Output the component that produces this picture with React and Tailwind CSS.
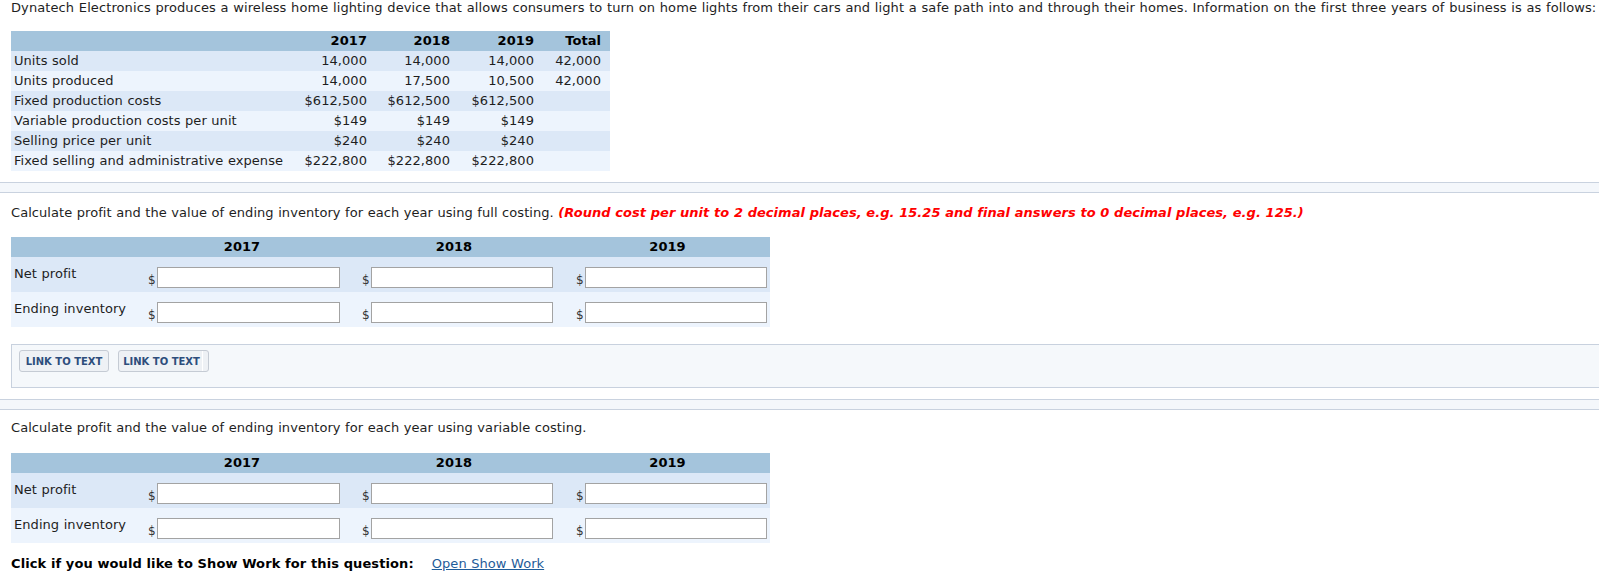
const facts = [
  { label: 'Units sold', v: ['14,000', '14,000', '14,000', '42,000'] },
  { label: 'Units produced', v: ['14,000', '17,500', '10,500', '42,000'] },
  { label: 'Fixed production costs', v: ['$612,500', '$612,500', '$612,500', ''] },
  { label: 'Variable production costs per unit', v: ['$149', '$149', '$149', ''] },
  { label: 'Selling price per unit', v: ['$240', '$240', '$240', ''] },
  { label: 'Fixed selling and administrative expense', v: ['$222,800', '$222,800', '$222,800', ''] },
];

function Separator() {
  return <div className="h-[11px] w-full border-y border-[#c9d2df] bg-[#f4f7fb]" />;
}

function Money({ lead }) {
  return (
    <div className={`flex items-end pr-[3px] ${lead}`}>
      <span className="mb-[2px] text-[12px] leading-none text-[#333]">$</span>
      <input type="text" className="ml-[1px] h-[21px] w-[183px] border border-[#a3a3a3] bg-white outline-none" />
    </div>
  );
}

function AnswerTable() {
  const rows = ['Net profit', 'Ending inventory'];
  return (
    <div className="ml-[11px] w-[759px]">
      <div className="grid h-[20px] grid-cols-[130px_202px_222px_205px] bg-[#a4c4dc] font-bold leading-[20px] tracking-[0.05px] text-black">
        <div />
        <div className="text-center">2017</div>
        <div className="text-center">2018</div>
        <div className="text-center">2019</div>
      </div>
      {rows.map((r, i) => (
        <div key={r} className={`flex h-[35px] ${i % 2 === 0 ? 'bg-[#dce8f7]' : 'bg-[#edf4fd]'}`}>
          <div className="w-[130px] pl-[3px] pt-[9px] leading-[16px]">{r}</div>
          <div className="flex w-[629px] items-end pb-[4px]">
            <Money lead="w-[202px] pl-[7px]" />
            <Money lead="w-[213px] pl-[19px]" />
            <Money lead="w-[214px] pl-[20px]" />
          </div>
        </div>
      ))}
    </div>
  );
}

export default function App() {
  return (
    <div className="h-[575px] w-[1599px] overflow-hidden bg-white font-['DejaVu_Sans',sans-serif] text-[13px] tracking-[0.06px] text-[#1e1e1e] [word-spacing:0.3px]">
      <p className="whitespace-nowrap pl-[11px] leading-[16px] tracking-[0.1px] [word-spacing:0.4px]">
        Dynatech Electronics produces a wireless home lighting device that allows consumers to turn on home lights from their cars and light a safe path into and through their homes. Information on the first three years of business is as follows:
      </p>

      <div className="ml-[11px] mt-[15px] w-[599px]">
        <div className="grid h-[20px] grid-cols-[283px_82px_83px_84px_67px] bg-[#a4c4dc] font-bold leading-[20px] tracking-[0.05px] text-black">
          <div />
          <div className="pr-[9px] text-right">2017</div>
          <div className="pr-[9px] text-right">2018</div>
          <div className="pr-[9px] text-right">2019</div>
          <div className="pr-[9px] text-right">Total</div>
        </div>
        {facts.map((f, i) => (
          <div
            key={f.label}
            className={`grid h-[20px] grid-cols-[283px_82px_83px_84px_67px] leading-[20px] ${i % 2 === 0 ? 'bg-[#dce8f7]' : 'bg-[#edf4fd]'}`}
          >
            <div className="whitespace-nowrap pl-[3px]">{f.label}</div>
            {f.v.map((x, j) => (
              <div key={j} className="pr-[9px] text-right">{x}</div>
            ))}
          </div>
        ))}
      </div>

      <div className="mt-[11px]">
        <Separator />
      </div>

      <p className="mt-[12px] whitespace-nowrap pl-[11px] leading-[16px]">
        Calculate profit and the value of ending inventory for each year using full costing.{' '}
        <span className="font-bold italic tracking-[0.04px] text-[#ff0000] [word-spacing:0.1px]">
          (Round cost per unit to 2 decimal places, e.g. 15.25 and final answers to 0 decimal places, e.g. 125.)
        </span>
      </p>

      <div className="mt-[16px]">
        <AnswerTable />
      </div>

      <div className="ml-[11px] mt-[17px] h-[44px] border border-r-0 border-[#c8d1de] bg-[#f5f8fb] pl-[7px] pt-[5px]">
        <div className="flex gap-[9px]">
          <button className="h-[22px] w-[90px] rounded-[3px] border border-[#c5cbd4] bg-[#eef1f5] text-[10px] font-bold tracking-normal text-[#2d4d7c] [word-spacing:0px]">
            LINK TO TEXT
          </button>
          <button className="relative h-[22px] w-[91px] rounded-[3px] border border-[#c5cbd4] bg-[#eef1f5] pr-[4px] text-[10px] font-bold tracking-normal text-[#2d4d7c] [word-spacing:0px]">
            LINK TO TEXT
            <span className="absolute right-[5px] top-0 h-full w-[1px] bg-white" />
          </button>
        </div>
      </div>

      <div className="mt-[11px]">
        <Separator />
      </div>

      <p className="mt-[10px] whitespace-nowrap pl-[11px] leading-[16px]">
        Calculate profit and the value of ending inventory for each year using variable costing.
      </p>

      <div className="mt-[17px]">
        <AnswerTable />
      </div>

      <p className="mt-[13px] whitespace-nowrap pl-[11px] leading-[16px]">
        <span className="font-bold tracking-[0.1px] text-black [word-spacing:0px]">Click if you would like to Show Work for this question:</span>
        <a href="#" className="ml-[18px] text-[#1f5c99] underline">Open Show Work</a>
      </p>
    </div>
  );
}
